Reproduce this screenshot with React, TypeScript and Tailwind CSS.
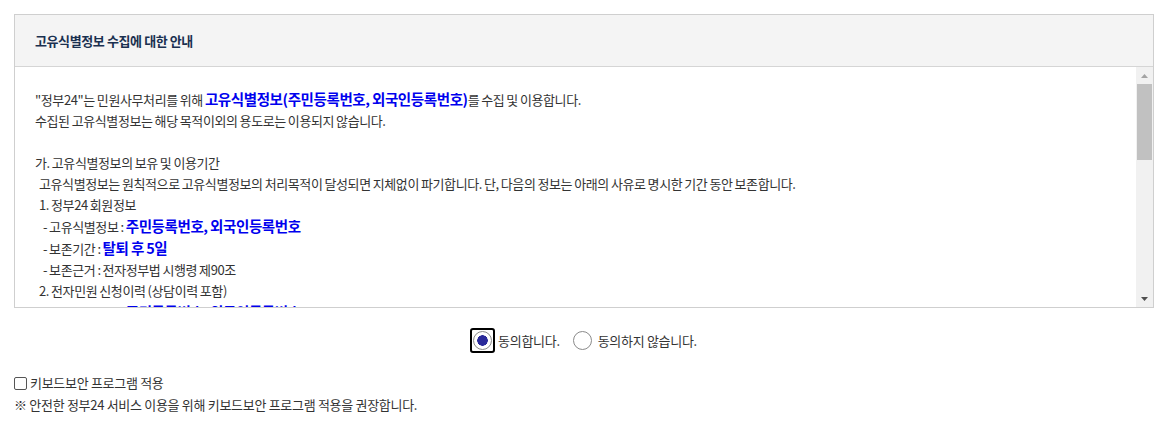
import React, { useState } from 'react';

const font = { fontFamily: '"Noto Sans CJK KR", "Noto Sans", sans-serif' };

function Strong({ children }: { children: React.ReactNode }) {
  return <strong className="text-[14.5px] font-bold text-[#0000ee]">{children}</strong>;
}

export default function App() {
  const [agree, setAgree] = useState('Y');
  const [keyboard, setKeyboard] = useState(false);

  return (
    <div className="w-[1162px] h-[428px] bg-white pt-[14px] px-[14px] text-[#333] tracking-[-0.3px]" style={font}>
      <div className="w-[1140px] border border-[#cfcfcf]">
        <div className="h-[52px] bg-[#f4f4f4] border-b border-[#d5d5d5] flex items-center px-[20px]">
          <h2 className="text-[13px] font-bold text-[#1a3050] tracking-[-0.4px]">고유식별정보 수집에 대한 안내</h2>
        </div>
        <div className="flex h-[240px]">
          <div className="flex-1 overflow-hidden pl-[20px] pt-[21px] text-[13px] leading-[21px] tracking-[-0.4px] [word-spacing:-0.5px]">
            <p>"정부24"는 민원사무처리를 위해 <Strong>고유식별정보(주민등록번호, 외국인등록번호)</Strong>를 수집 및 이용합니다.</p>
            <p>수집된 고유식별정보는 해당 목적이외의 용도로는 이용되지 않습니다.</p>
            <p>&nbsp;</p>
            <p>가. 고유식별정보의 보유 및 이용기간</p>
            <p className="pl-[4px]">고유식별정보는 원칙적으로 고유식별정보의 처리목적이 달성되면 지체없이 파기합니다. 단, 다음의 정보는 아래의 사유로 명시한 기간 동안 보존합니다.</p>
            <p className="pl-[4px]">1. 정부24 회원정보</p>
            <p className="pl-[8px]">- 고유식별정보 : <Strong>주민등록번호, 외국인등록번호</Strong></p>
            <p className="pl-[8px]">- 보존기간 : <Strong>탈퇴 후 5일</Strong></p>
            <p className="pl-[8px]">- 보존근거 : 전자정부법 시행령 제90조</p>
            <p className="pl-[4px]">2. 전자민원 신청이력 (상담이력 포함)</p>
            <p className="pl-[8px]">- 고유식별정보 : <Strong>주민등록번호, 외국인등록번호</Strong></p>
            <p className="pl-[8px]">- 보존기간 : <Strong>5년</Strong></p>
          </div>
          <div className="w-[17px] bg-[#f1f1f1] flex flex-col items-center">
            <div className="h-[17px] flex items-center justify-center">
              <svg width="7" height="4" viewBox="0 0 7 4"><path d="M3.5 0L7 4H0z" fill="#a3a3a3" /></svg>
            </div>
            <div className="w-[15px] h-[76px] bg-[#c1c1c1]" />
            <div className="flex-1" />
            <div className="h-[17px] flex items-center justify-center">
              <svg width="7" height="4" viewBox="0 0 7 4"><path d="M0 0H7L3.5 4z" fill="#505050" /></svg>
            </div>
          </div>
        </div>
      </div>

      <div className="flex justify-center items-center gap-[8px] mt-[20px] pl-[5px] text-[13px]">
        <label className="flex items-center gap-[3px]">
          <span className="w-[25px] h-[25px] rounded-[3px] border-2 border-black flex items-center justify-center">
            <input
              type="radio"
              name="agree"
              checked={agree === 'Y'}
              onChange={() => setAgree('Y')}
              className="appearance-none w-[19px] h-[19px] rounded-full border border-[#8a8a8a] bg-white checked:bg-[radial-gradient(circle,#2a2a9a_0_5px,transparent_5.5px)] m-0"
            />
          </span>
          동의합니다.
        </label>
        <label className="flex items-center gap-[6px] ml-[5px]">
          <input
            type="radio"
            name="agree"
            checked={agree === 'N'}
            onChange={() => setAgree('N')}
            className="appearance-none w-[19px] h-[19px] rounded-full border border-[#8a8a8a] bg-white checked:bg-[radial-gradient(circle,#2a2a9a_0_5px,transparent_5.5px)] m-0"
          />
          동의하지 않습니다.
        </label>
      </div>

      <div className="mt-[19px] text-[13px] leading-[22px]">
        <label className="flex items-center gap-[3px]">
          <input
            type="checkbox"
            checked={keyboard}
            onChange={(e) => setKeyboard(e.target.checked)}
            className="appearance-none w-[13px] h-[13px] rounded-[2px] border border-[#555] bg-white m-0"
          />
          키보드보안 프로그램 적용
        </label>
        <p>※ 안전한 정부24 서비스 이용을 위해 키보드보안 프로그램 적용을 권장합니다.</p>
      </div>
    </div>
  );
}
